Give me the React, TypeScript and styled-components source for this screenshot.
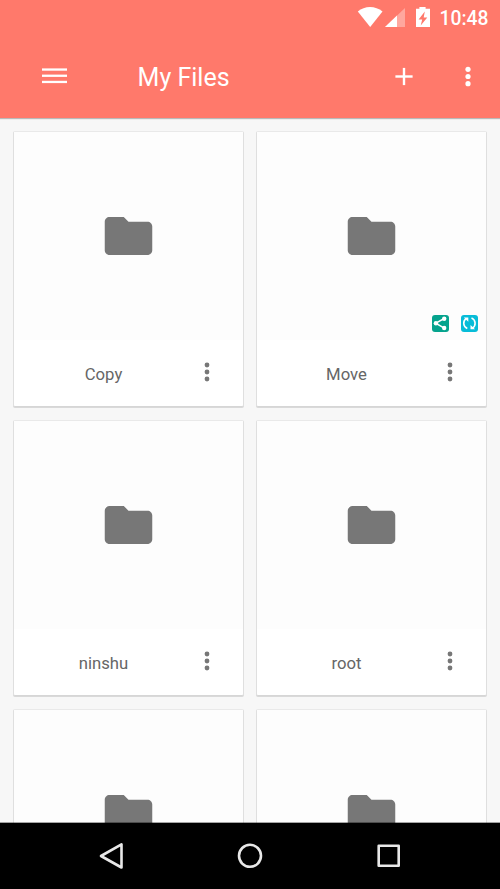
import React from 'react';
import styled, { createGlobalStyle } from 'styled-components';

const GlobalStyle = createGlobalStyle`
  * { box-sizing: border-box; }
  body { margin: 0; background: #f7f7f7; font-family: Roboto, sans-serif; }
  svg { display: block; flex: none; }
`;

const Screen = styled.div`
  display: flex;
  flex-direction: column;
  width: 500px;
  height: 889px;
  overflow: hidden;
  background: #f7f7f7;
`;

const Header = styled.header`
  flex: none;
  height: 118px;
  background: #ff796b;
  color: #fff;
  box-shadow: 0 1px 1px rgba(0, 0, 0, 0.25);
`;

const StatusBar = styled.div`
  display: flex;
  align-items: center;
  height: 36px;
  padding-left: 357px;
`;

const Clock = styled.span`
  margin-left: 8.5px;
  padding-top: 2px;
  font-size: 19.3px;
  line-height: 34px;
  font-weight: 500;
`;

const Toolbar = styled.div`
  display: flex;
  align-items: center;
  height: 82px;
  padding: 0 24px 0 42px;
`;

const Title = styled.h1`
  flex: 1;
  margin: 0 0 0 70.6px;
  padding-top: 2px;
  font-size: 25px;
  line-height: 80px;
  font-weight: 400;
`;

const ToolButton = styled.button<{ $gap?: number }>`
  display: flex;
  margin: 0 0 0 ${({ $gap = 0 }) => $gap}px;
  padding: 0;
  border: 0;
  background: none;
  color: inherit;
`;

const Files = styled.main`
  flex: 1;
  min-height: 0;
  display: grid;
  grid-template-columns: 231px 231px;
  grid-auto-rows: 276px;
  gap: 13px 12px;
  padding: 13px 13px 0;
  overflow: hidden;
`;

const Card = styled.article`
  display: flex;
  flex-direction: column;
  background: #fff;
  border: 1px solid #dfdfdf;
  border-top-color: #e9e9e9;
  border-bottom-color: #d6d6d6;
  border-radius: 2px;
  box-shadow: 0 1px 0 #d9d9d9;
`;

const Preview = styled.div`
  position: relative;
  display: flex;
  align-items: center;
  justify-content: center;
  height: 208px;
  background: #fdfdfd;
`;

const Badges = styled.div`
  position: absolute;
  right: 8px;
  bottom: 8px;
  display: flex;
  gap: 11px;
`;

const Caption = styled.div`
  flex: 1;
  display: flex;
  align-items: center;
`;

const Name = styled.span`
  width: 179px;
  padding-top: 4px;
  text-align: center;
  font-size: 16.7px;
  line-height: 22px;
  color: #666;
`;

const MoreButton = styled.button`
  display: flex;
  margin: 0 0 3px 9px;
  padding: 0;
  border: 0;
  background: none;
`;

const NavBar = styled.nav`
  flex: none;
  display: flex;
  align-items: center;
  justify-content: space-between;
  height: 66px;
  padding: 0 98px;
  background: #000;
  box-shadow: 0 -1px 0 rgba(0, 0, 0, 0.35);
  z-index: 1;
`;

const FolderIcon = () => (
  <svg width="57" height="58" viewBox="0 0 24 24" fill="#777">
    <path d="M10 4H4c-1.1 0-2 .9-2 2v12c0 1.1.9 2 2 2h16c1.1 0 2-.9 2-2V8c0-1.1-.9-2-2-2h-8z" />
  </svg>
);

const CardDots = () => (
  <svg width="10" height="22" viewBox="0 0 10 22" fill="#777">
    <circle cx="5" cy="4" r="2.4" />
    <circle cx="5" cy="11" r="2.4" />
    <circle cx="5" cy="18" r="2.4" />
  </svg>
);

const ShareBadge = () => (
  <svg width="18" height="17" viewBox="0.5 0 18 17">
    <rect x=".5" width="17" height="17" rx="3" fill="#05a38d" />
    <path d="M12.8 3.5 4.2 8.2l8.6 4.9" fill="none" stroke="#fff" strokeWidth="1.5" />
    <g fill="#fff">
      <circle cx="12.7" cy="3.7" r="2.2" />
      <circle cx="4.4" cy="8.2" r="2.2" />
      <circle cx="12.7" cy="13" r="2.2" />
    </g>
  </svg>
);

const SyncBadge = () => (
  <svg width="17" height="17" viewBox="0 0 17 17">
    <rect width="17" height="17" rx="3" fill="#07bcd8" />
    <g fill="none" stroke="#fff" strokeWidth="1.6">
      <path d="M5.4 3.4A5.7 5.7 0 0 0 6.3 13.5" />
      <path d="M11.3 13.2A5.7 5.7 0 0 0 10.5 3" />
    </g>
    <g fill="#fff">
      <path d="M2.8 2.4h4.500v4.300z" />
      <path d="M14 14.200H9.500V9.900z" />
    </g>
  </svg>
);

type FileItem = { name: string; shared?: boolean };

const files: FileItem[] = [
  { name: 'Copy' },
  { name: 'Move', shared: true },
  { name: 'ninshu' },
  { name: 'root' },
  { name: '' },
  { name: '' },
];

const FileCard = ({ name, shared }: FileItem) => (
  <Card>
    <Preview>
      <FolderIcon />
      {shared && (
        <Badges>
          <ShareBadge />
          <SyncBadge />
        </Badges>
      )}
    </Preview>
    <Caption>
      <Name>{name}</Name>
      <MoreButton aria-label="More">
        <CardDots />
      </MoreButton>
    </Caption>
  </Card>
);

export default function App() {
  return (
    <Screen>
      <GlobalStyle />
      <Header>
        <StatusBar>
          <svg width="74" height="36" viewBox="0 0 74 36" fill="#fff">
            <path d="M.8 11.4C4.3 8.6 8.5 7 13 7s9 1.6 12.5 4.4L13.2 27z" />
            <path d="M48 8v19H28z" fillOpacity=".35" />
            <path d="M40 15.6V27H28z" />
            <path
              fillRule="evenodd"
              d="M62.4 7h6.2v1.8H73V27H59V8.8h3.4zM67.8 11.4l-6.2 8h3.6l-1.5 6.2 6.6-8.2h-3.6z"
            />
          </svg>
          <Clock>10:48</Clock>
        </StatusBar>
        <Toolbar>
          <ToolButton aria-label="Menu">
            <svg width="25" height="20" viewBox="0 0 25 20" fill="#fff">
              <rect y="1.4" width="25" height="2.3" />
              <rect y="7.6" width="25" height="2.3" />
              <rect y="13.8" width="25" height="2.3" />
            </svg>
          </ToolButton>
          <Title>My Files</Title>
          <ToolButton aria-label="Add">
            <svg width="20" height="20" viewBox="0 0 20 20" fill="#fff">
              <rect x="1.4" y="8.3" width="17.2" height="2.4" />
              <rect x="8.8" y=".9" width="2.4" height="17.2" />
            </svg>
          </ToolButton>
          <ToolButton aria-label="More options" $gap={46}>
            <svg width="16" height="22" viewBox="0 0 16 22" fill="#fff">
              <circle cx="8" cy="3.3" r="2.6" />
              <circle cx="8" cy="10.5" r="2.6" />
              <circle cx="8" cy="17.7" r="2.6" />
            </svg>
          </ToolButton>
        </Toolbar>
      </Header>
      <Files>
        {files.map((file, i) => (
          <FileCard key={i} {...file} />
        ))}
      </Files>
      <NavBar>
        <svg width="26" height="28" viewBox="0 0 26 28" fill="none" stroke="#e8e8e8" strokeWidth="2.6" strokeLinejoin="round">
          <path d="M23.5 2.3v23.2L3 14z" />
        </svg>
        <svg width="26" height="28" viewBox="0 0 26 28" fill="none" stroke="#e8e8e8" strokeWidth="2.6">
          <circle cx="13" cy="13.8" r="11" />
        </svg>
        <svg width="26" height="28" viewBox="0 0 26 28" fill="none" stroke="#e8e8e8" strokeWidth="2.6" strokeLinejoin="round">
          <rect x="2.7" y="3.8" width="20" height="20" />
        </svg>
      </NavBar>
    </Screen>
  );
}
